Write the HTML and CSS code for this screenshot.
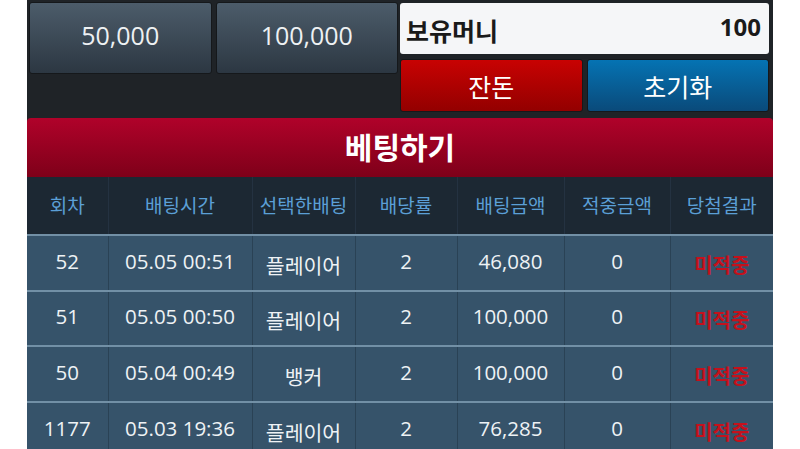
FILE: index.html
```html
<!DOCTYPE html>
<html lang="ko">
<head>
<meta charset="utf-8">
<link rel="stylesheet" href="styles.css">
</head>
<body>
<div class="panel">
  <div class="top">
    <div class="chips">
      <div class="chip">50,000</div>
      <div class="chip">100,000</div>
    </div>
    <div class="side">
      <div class="money"><span class="money-label">보유머니</span><span class="money-val">100</span></div>
      <div class="actions">
        <div class="btn btn-red">잔돈</div>
        <div class="btn btn-blue">초기화</div>
      </div>
    </div>
  </div>
  <div class="banner">베팅하기</div>
  <table class="list">
    <colgroup>
      <col class="c1"><col class="c2"><col class="c3"><col class="c4"><col class="c5"><col class="c6"><col class="c7">
    </colgroup>
    <thead>
      <tr><th>회차</th><th>배팅시간</th><th>선택한배팅</th><th>배당률</th><th>배팅금액</th><th>적중금액</th><th>당첨결과</th></tr>
    </thead>
    <tbody>
      <tr><td>52</td><td>05.05 00:51</td><td class="ko">플레이어</td><td>2</td><td>46,080</td><td>0</td><td class="miss">미적중</td></tr>
      <tr><td>51</td><td>05.05 00:50</td><td class="ko">플레이어</td><td>2</td><td>100,000</td><td>0</td><td class="miss">미적중</td></tr>
      <tr><td>50</td><td>05.04 00:49</td><td class="ko">뱅커</td><td>2</td><td>100,000</td><td>0</td><td class="miss">미적중</td></tr>
      <tr><td>1177</td><td>05.03 19:36</td><td class="ko">플레이어</td><td>2</td><td>76,285</td><td>0</td><td class="miss">미적중</td></tr>
    </tbody>
  </table>
</div>
</body>
</html>
```

FILE: styles.css
```css
html, body {
  margin: 0;
  padding: 0;
  background: #ffffff;
  overflow: hidden;
}
body {
  font-family: "Open Sans", "Noto Sans CJK KR", sans-serif;
  height: 449px;
}
.panel {
  margin-left: 27px;
  width: 746px;
  height: 449px;
  background: #1f2327;
  overflow: hidden;
}
.top {
  height: 118px;
  display: flex;
  padding: 2px 4px 0 2px;
  box-sizing: border-box;
  gap: 2px;
}
.chips {
  width: 369px;
  display: flex;
  gap: 4px;
  height: 72px;
}
.chip {
  flex: 1;
  display: flex;
  align-items: center;
  justify-content: center;
  padding-bottom: 7px;
  background: linear-gradient(#4c5c6a, #2c3742);
  border: 1px solid #15181b;
  border-radius: 3px;
  color: #eef1f3;
  font-size: 25px;
}
.side {
  flex: 1;
  display: flex;
  flex-direction: column;
  padding-top: 1px;
}
.money {
  height: 51px;
  background: #f5f6f8;
  border-radius: 3px;
  display: flex;
  align-items: center;
  justify-content: space-between;
  padding: 0 8px 0 6px;
  box-sizing: border-box;
  color: #1a1a1a;
  font-weight: bold;
}
.money-label {
  font-family: "Noto Sans CJK KR", sans-serif;
  font-size: 25px;
  margin-top: 2px;
}
.money-val {
  font-size: 24px;
  margin-top: -5px;
}
.actions {
  display: flex;
  gap: 4px;
  margin-top: 5px;
  height: 53px;
}
.btn {
  flex: 1;
  display: flex;
  align-items: center;
  justify-content: center;
  border-radius: 3px;
  border: 1px solid #15181b;
  color: #ffffff;
  font-family: "Noto Sans CJK KR", sans-serif;
  font-size: 25px;
}
.btn-red {
  background: linear-gradient(#c80202, #930000);
}
.btn-blue {
  background: linear-gradient(#0573b3, #0a4a7a);
}
.banner {
  height: 59px;
  background: linear-gradient(#b0022a, #7e0019);
  border-radius: 4px 4px 0 0;
  display: flex;
  align-items: center;
  justify-content: center;
  padding-bottom: 4px;
  box-sizing: border-box;
  color: #ffffff;
  font-family: "Noto Sans CJK KR", sans-serif;
  font-weight: bold;
  font-size: 30px;
}
.list {
  width: 746px;
  border-collapse: collapse;
  table-layout: fixed;
}
.c1 { width: 81px; }
.c2 { width: 144px; }
.c3 { width: 103px; }
.c4 { width: 102px; }
.c5 { width: 107px; }
.c6 { width: 106px; }
.c7 { width: 103px; }
.list th {
  height: 58px;
  box-sizing: border-box;
  background: #1c2833;
  color: #5b9fd6;
  font-family: "Noto Sans CJK KR", sans-serif;
  font-weight: normal;
  font-size: 19px;
  padding: 0 0 2px;
  border-left: 1px solid #243241;
}
.list th:first-child, .list td:first-child {
  border-left: none;
}
.list tbody tr {
  height: 55.5px;
}
.list td {
  height: 55.5px;
  box-sizing: border-box;
  background: #36536a;
  color: #eef2f5;
  font-size: 20.5px;
  line-height: 24px;
  text-align: center;
  padding: 0 0 4px;
  border-top: 2px solid #7290a6;
  border-left: 1px solid #2a4255;
  white-space: nowrap;
}
.list td.ko {
  font-family: "Noto Sans CJK KR", sans-serif;
  font-size: 20.5px;
  padding: 4px 0 0;
}
.list td.miss {
  color: #c5111c;
  font-family: "Noto Sans CJK KR", sans-serif;
  font-weight: bold;
  font-size: 20px;
  padding: 4px 0 0;
}
```
